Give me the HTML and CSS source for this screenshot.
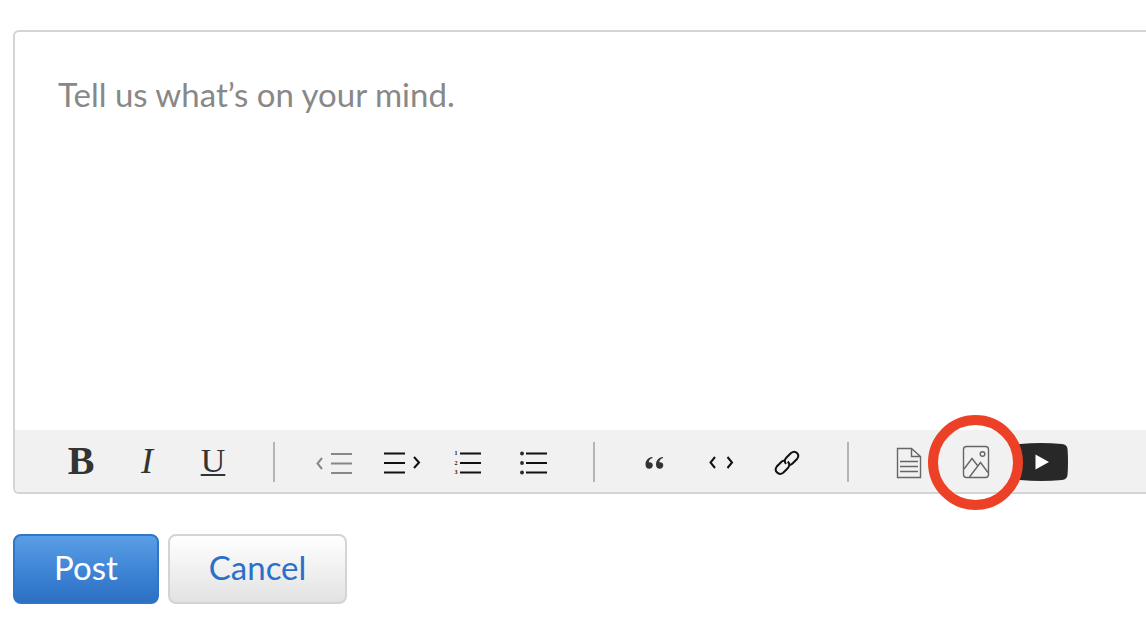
FILE: index.html
```
<!DOCTYPE html>
<html lang="en">
<head>
    <meta charset="UTF-8">
    <meta name="viewport" content="width=device-width, initial-scale=1.0">
    <title>New Post</title>
    <link rel="stylesheet" href="styles.css">
</head>
<body>
    <form class="post-form">
        <div class="editor">
            <textarea class="editor-text" aria-label="Message" placeholder="Tell us what’s on your mind."></textarea>

            <!-- Formatting toolbar -->
            <div class="toolbar">
                <button type="button" class="tool bold" aria-label="Bold">B</button>
                <button type="button" class="tool italic" aria-label="Italic">I</button>
                <button type="button" class="tool underline" aria-label="Underline">U</button>
                <span class="separator"></span>

                <button type="button" class="tool disabled" aria-label="Outdent" disabled>
                    <svg width="40" height="40" viewBox="0 0 40 40"><path d="M7 16L2.500 21.500L7 27M16 12H37M16 21.500H37M16 31H37"/></svg>
                </button>
                <button type="button" class="tool" aria-label="Indent">
                    <svg width="40" height="40" viewBox="0 0 40 40"><path d="M3 11.500H24M3 21H24M3 30.500H24M33 15L38 20.500L33 26"/></svg>
                </button>
                <button type="button" class="tool" aria-label="Numbered list">
                    <svg width="40" height="40" viewBox="0 0 40 40"><path d="M13 11.500H34M13 21H34M13 30.500H34"/><g class="numbers"><text x="9" y="13">1</text><text x="9" y="23">2</text><text x="9" y="32">3</text></g></svg>
                </button>
                <button type="button" class="tool" aria-label="Bulleted list">
                    <svg width="40" height="40" viewBox="0 0 40 40"><path d="M13 11.500H34M13 21H34M13 30.500H34"/><g class="solid"><circle cx="9" cy="11.500" r="1.900"/><circle cx="9" cy="21" r="1.900"/><circle cx="9" cy="30.500" r="1.900"/></g></svg>
                </button>
                <span class="separator"></span>

                <button type="button" class="tool" aria-label="Quote">
                    <svg width="40" height="40" viewBox="0 0 40 40"><path class="quote" d="M17.500 15C13 15.500 10.500 18.500 10.500 22.500C10.500 25.200 12 26.800 14.200 26.800C16.400 26.800 17.800 25.200 17.800 23.300C17.800 21.200 16.200 20 13.800 20.300C13.800 18.300 15 16.500 17.500 15.900ZM28 15C23.500 15.500 21 18.500 21 22.500C21 25.200 22.500 26.800 24.700 26.800C26.900 26.800 28.300 25.200 28.300 23.300C28.300 21.200 26.700 20 24.300 20.300C24.300 18.300 25.500 16.500 28 15.900Z"/></svg>
                </button>
                <button type="button" class="tool" aria-label="Code">
                    <svg width="40" height="40" viewBox="0 0 40 40"><path d="M14 15L9.500 20.500L14 26M26.500 15L31 20.500L26.500 26"/></svg>
                </button>
                <button type="button" class="tool" aria-label="Link">
                    <svg width="40" height="40" viewBox="0 0 40 40"><path d="M19 22C17 19.500 17.500 17.500 19.500 15.500L24 11C28.500 7.500 33.500 12.500 30 17L25.500 21.500C24.500 22.500 23.500 23 22.500 23M17.500 18.500C16 18.500 15 19.200 14 20.200L9.800 24.500C6.500 29 11.800 34 16.200 30.800L20.500 26.500C22.500 24.500 23 22 20.800 19.500"/></svg>
                </button>
                <span class="separator"></span>

                <button type="button" class="tool thin" aria-label="Attach file">
                    <svg width="40" height="40" viewBox="0 0 40 40"><path d="M8.500 6.500H22.500L31.500 14.500V35.500H8.500ZM22.500 6.500V14.500H31.500M11 19.500H29M11 24.500H29M11 29.500H29"/></svg>
                </button>
                <button type="button" class="tool thin highlighted" aria-label="Insert image">
                    <svg width="40" height="40" viewBox="0 0 40 40"><rect x="8.500" y="4.500" width="25" height="31" rx="3"/><circle cx="27.500" cy="12" r="2.300"/><path d="M9 27L17 16.500L22.500 23.500M14.500 35L25.500 20.500L33 30.500"/></svg>
                </button>
                <button type="button" class="tool" aria-label="Insert video">
                    <svg width="54" height="40" viewBox="0 0 54 40"><path class="solid" d="M6 2Q27 0 48 2Q53 2.500 53.500 7Q54.500 20 53.500 33Q53 37.500 48 38Q27 40 6 38Q1 37.500 0.500 33Q-0.500 20 0.500 7Q1 2.500 6 2Z"/><path class="play" d="M21.500 12.500L35 20L21.500 27.500Z"/></svg>
                </button>
            </div>
        </div>

        <div class="actions">
            <button type="submit" class="btn post">Post</button>
            <button type="button" class="btn cancel">Cancel</button>
        </div>
    </form>
</body>
</html>
```
FILE: styles.css
```
body {
    margin: 0;
    background-color: #fff;
    font-family: Lato, "Open Sans", sans-serif;
    overflow-x: hidden;
}

.post-form {
    padding: 30px 0 32px 13px;
}

.editor {
    border: 2px solid #d4d4d4;
    border-right: none;
    border-radius: 6px 0 0 6px;
}

.editor-text {
    display: block;
    box-sizing: border-box;
    width: 100%;
    height: 398px;
    padding: 38px 43px;
    border: none;
    border-radius: 6px;
    outline: none;
    resize: none;
    background-color: #fff;
    font-family: inherit;
    font-size: 33px;
    line-height: 48px;
    color: #333;
}

.editor-text::placeholder {
    color: #888;
    opacity: 1;
}

/* Toolbar */
.toolbar {
    display: flex;
    align-items: center;
    height: 62px;
    padding-left: 33px;
    background-color: #f1f1f1;
    border-radius: 0 0 0 4px;
}

.tool {
    display: flex;
    justify-content: center;
    align-items: center;
    flex: none;
    width: 66px;
    height: 62px;
    padding: 0;
    border: none;
    background: none;
    font-family: "Liberation Serif", serif;
    font-size: 36px;
    line-height: 40px;
    color: #333;
    cursor: pointer;
}

.tool svg {
    flex: none;
    margin-top: 2px;
    fill: none;
    stroke: #111;
    stroke-width: 2;
    overflow: visible;
}

.bold {
    font-size: 40px;
    font-weight: bold;
}

.italic {
    font-style: italic;
}

.underline {
    font-size: 34px;
    text-decoration: underline;
    text-decoration-thickness: 2px;
    text-underline-offset: 2px;
}

.tool.disabled svg {
    stroke: #888;
}

.tool.thin svg {
    stroke: #666;
    stroke-width: 1.4;
}

.tool .solid {
    fill: #282828;
    stroke: none;
}

.tool .quote {
    fill: #333;
    stroke: none;
}

.tool .play {
    fill: #fff;
    stroke: none;
}

.numbers {
    fill: #111;
    stroke: none;
    font-size: 6px;
    font-weight: bold;
    text-anchor: middle;
}

.separator {
    flex: none;
    width: 2px;
    height: 40px;
    margin: 2px 27px 0 27px;
    background-color: #b5b5b5;
}

/* Red ring over the image button */
.highlighted {
    position: relative;
    z-index: 1;
}

.highlighted::after {
    content: "";
    position: absolute;
    top: -15px;
    left: -14px;
    box-sizing: border-box;
    width: 95px;
    height: 95px;
    border: 10px solid #ec4027;
    border-radius: 50%;
}

/* Buttons */
.actions {
    display: flex;
    gap: 9px;
    margin-top: 40px;
}

.btn {
    height: 70px;
    padding: 0 39px 4px;
    border: 2px solid #d4d4d4;
    border-radius: 8px;
    font-family: inherit;
    font-size: 33px;
    cursor: pointer;
}

.post {
    border-color: #2f76c8;
    background: linear-gradient(#5a9ee5, #3f86d6 50%, #2c6fc3);
    color: #fff;
}

.cancel {
    background: linear-gradient(#fff, #e2e2e2);
    color: #2a70c8;
}
```
